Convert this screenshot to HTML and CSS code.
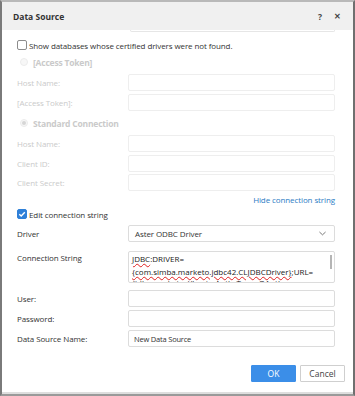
FILE: index.html
```html
<!DOCTYPE html>
<html lang="en">
<head>
<meta charset="UTF-8" />
<title>Data Source</title>
<link rel="stylesheet" href="styles.css">
</head>
<body>
  <div class="dialog" role="dialog" aria-label="Data Source">
    <header class="dialog-head">
      <span class="title">Data Source</span>
      <span class="head-btn help">?</span>
      <span class="head-btn close">&#x2715;</span>
    </header>

    <div class="dialog-body">
      <div class="cut-input"></div>

      <label class="check-row first">
        <span class="checkbox"></span>
        <span>Show databases whose certified drivers were not found.</span>
      </label>

      <div class="radio-row disabled r1">
        <span class="radio"></span>
        <span>[Access Token]</span>
      </div>
      <div class="field disabled gap5">
        <span class="label">Host Name:</span>
        <span class="input"></span>
      </div>
      <div class="field disabled">
        <span class="label">[Access Token]:</span>
        <span class="input"></span>
      </div>

      <div class="radio-row disabled r2">
        <span class="radio on"></span>
        <span>Standard Connection</span>
      </div>
      <div class="field disabled gap5">
        <span class="label">Host Name:</span>
        <span class="input"></span>
      </div>
      <div class="field disabled">
        <span class="label">Client ID:</span>
        <span class="input"></span>
      </div>
      <div class="field disabled gap2">
        <span class="label">Client Secret:</span>
        <span class="input"></span>
      </div>

      <div class="link-row"><a href="#">Hide connection string</a></div>

      <label class="check-row edit">
        <span class="checkbox checked">
          <svg viewBox="0 0 10 10" width="10" height="10"><path d="M2.3 5.2 L4.2 7 L7.8 3.2" fill="none" stroke="#fff" stroke-width="1.4"/></svg>
        </span>
        <span>Edit connection string</span>
      </label>

      <div class="field gap5">
        <span class="label">Driver</span>
        <span class="input select">
          <span>Aster ODBC Driver</span>
          <svg viewBox="0 0 8 5" width="7" height="5"><path d="M0.5 0.8 L4 4 L7.5 0.8" fill="none" stroke="#555" stroke-width="0.9"/></svg>
        </span>
      </div>

      <div class="field conn">
        <span class="label">Connection String</span>
        <div class="input area">
          <div><span class="typo">JDBC</span>:DRIVER=</div>
          <div><span class="typo">{com.simba.marketo.jdbc42.CLJDBCDriver}</span>;URL=</div>
          <div class="peek">{jdbc:marketo://host=;Auth_Type=OAuth</div>
          <span class="thumb"></span>
        </div>
      </div>

      <div class="field gap7">
        <span class="label">User:</span>
        <span class="input"></span>
      </div>
      <div class="field">
        <span class="label">Password:</span>
        <span class="input"></span>
      </div>
      <div class="field">
        <span class="label">Data Source Name:</span>
        <span class="input text">New Data Source</span>
      </div>
    </div>

    <footer class="dialog-foot">
      <button class="btn primary">OK</button>
      <button class="btn">Cancel</button>
    </footer>
  </div>
</body>
</html>
```

FILE: styles.css
```css
/* Base */
* {
  box-sizing: border-box;
}
body {
  margin: 0;
  font-family: 'Open Sans', 'Noto Sans', sans-serif;
  font-size: 8px;
  letter-spacing: -0.1px;
  color: #333;
  background: #fff;
}
/* Dialog frame */
.dialog {
  width: 355px;
  height: 396px;
  border-top: 2px solid #b9b9b9;
  border-left: 2px solid #7a7a7a;
  border-right: 2px solid #6f6f6f;
  border-bottom: 2px solid #9a9a9a;
  display: flex;
  flex-direction: column;
  overflow: hidden;
}
.dialog-head {
  height: 28px;
  flex: none;
  background: #f0f0f0;
  display: flex;
  align-items: center;
  padding: 0 0 0 11px;
  letter-spacing: 0;
}
.title {
  flex: 1;
  font-weight: 700;
  font-size: 8.5px;
  color: #333;
}
.head-btn {
  font-weight: 700;
  color: #444;
  font-size: 8.5px;
}
.help {
  margin-right: 12px;
}
.close {
  font-size: 7.5px;
  margin-right: 12px;
}
/* Body */
.dialog-body {
  flex: 1;
  padding: 0 18px 0 15px;
  overflow: hidden;
}
.cut-input {
  height: 2px;
  margin-left: 113px;
  border: 1px solid #e6e6e6;
  border-top: none;
  border-radius: 0 0 2px 2px;
}
.check-row {
  height: 14px;
  display: flex;
  align-items: center;
  gap: 2px;
  color: #333;
}
.check-row.first {
  margin-top: 6px;
}
.check-row.edit {
  height: 12px;
  margin-top: 2px;
}
.checkbox {
  width: 10px;
  height: 10px;
  border: 1px solid #8c8c8c;
  border-radius: 2px;
  flex: none;
  display: flex;
  background: #fff;
}
.checkbox.checked {
  background: #2f80d8;
  border-color: #2f80d8;
}
.checkbox.checked svg {
  margin: -1px;
}
.radio-row {
  height: 14px;
  display: flex;
  align-items: center;
  gap: 5px;
  padding-left: 3px;
  font-weight: 700;
  font-size: 8.5px;
  letter-spacing: -0.2px;
}
.r1 {
  margin-top: 3px;
}
.r2 {
  margin-top: 5px;
}
.radio {
  width: 8px;
  height: 8px;
  border-radius: 50%;
  border: 1px solid #ececec;
  background: #f7f7f7;
  display: flex;
  align-items: center;
  justify-content: center;
}
.radio.on::after {
  content: "";
  width: 4px;
  height: 4px;
  border-radius: 50%;
  background: #d6d6d6;
}
.disabled {
  color: #cacaca;
}
/* Fields */
.field {
  display: flex;
  align-items: center;
  margin-top: 3px;
}
.field.gap5 {
  margin-top: 5px;
}
.field.gap2 {
  margin-top: 2px;
}
.field.gap7 {
  margin-top: 7px;
}
.label {
  width: 111px;
  flex: none;
}
.input {
  flex: 1;
  height: 17px;
  border: 1px solid #dcdcdc;
  border-radius: 2px;
  background: #fff;
}
.disabled .input {
  border-color: #eeeeee;
}
.input.text {
  display: flex;
  align-items: center;
  padding-left: 5px;
  font-size: 7.5px;
  letter-spacing: -0.2px;
}
.input.select {
  display: flex;
  align-items: center;
  justify-content: space-between;
  padding: 0 8px 0 6px;
}
.field.conn {
  margin-top: 9px;
  align-items: flex-start;
}
.field.conn .label {
  padding-top: 1px;
}
.input.area {
  height: 32px;
  position: relative;
  overflow: hidden;
  padding: 0 10px 0 3px;
  font-size: 8px;
  letter-spacing: 0;
  line-height: 13px;
  color: #222;
}
.peek {
  height: 5px;
  overflow: hidden;
  line-height: 9px;
}
.typo {
  text-decoration: underline wavy #e02020;
  text-decoration-thickness: 1px;
  text-underline-offset: 1px;
}
.thumb {
  position: absolute;
  right: 2px;
  top: 3px;
  width: 2px;
  height: 14px;
  background: #b5b5b5;
}
.link-row {
  height: 12px;
  margin-top: 3px;
  text-align: right;
}
.link-row a {
  color: #2b7bc4;
  text-decoration: none;
}
/* Footer */
.dialog-foot {
  flex: none;
  height: 46px;
  display: flex;
  justify-content: flex-end;
  align-items: flex-start;
  gap: 4px;
  padding: 17px 8px 0 0;
  border-bottom: 2px solid #dedede;
}
.btn {
  height: 17px;
  width: 45px;
  font-family: inherit;
  font-size: 8.5px;
  border: 1px solid #cfcfcf;
  background: #fff;
  color: #444;
  border-radius: 1px;
  padding: 0;
}
.btn.primary {
  background: #3b8ee8;
  border-color: #3b8ee8;
  color: #fff;
}
```
